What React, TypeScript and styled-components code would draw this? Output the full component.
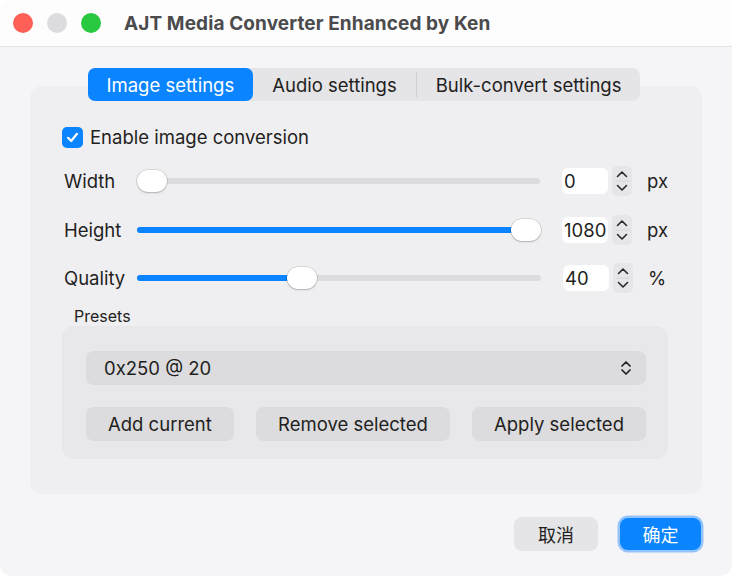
import React from "react";
import styled, { createGlobalStyle } from "styled-components";

const GlobalStyle = createGlobalStyle`
  html, body {
    margin: 0;
    padding: 0;
    background: #ffffff;
  }
  body {
    font-family: Inter, "Noto Sans", "Noto Sans CJK SC", sans-serif;
    color: #1f1f21;
    -webkit-font-smoothing: antialiased;
  }
`;

const BLUE = "#0a84ff";

type SliderRowT = { label: string; value: number; max: number; unit: string };

const rows: SliderRowT[] = [
  { label: "Width", value: 0, max: 1080, unit: "px" },
  { label: "Height", value: 1080, max: 1080, unit: "px" },
  { label: "Quality", value: 40, max: 100, unit: "%" },
];

const TRACK_W = 404;
const THUMB_W = 30;

function Stepper() {
  return (
    <StepperBox>
      <svg width="20" height="30" viewBox="0 0 20 30">
        <path d="M5.5 10.5 L10 6 L14.5 10.5" fill="none" stroke="#2a2a2c" strokeWidth="1.6" strokeLinecap="round" strokeLinejoin="round" />
        <line x1="3" y1="15" x2="17" y2="15" stroke="#d6d5d8" strokeWidth="1" />
        <path d="M5.5 19.5 L10 24 L14.5 19.5" fill="none" stroke="#2a2a2c" strokeWidth="1.6" strokeLinecap="round" strokeLinejoin="round" />
      </svg>
    </StepperBox>
  );
}

function Slider({ value, max }: { value: number; max: number }) {
  const ratio = value / max;
  const left = ratio * (TRACK_W - THUMB_W);
  return (
    <Track>
      <Fill style={{ width: left + THUMB_W / 2 }} />
      <Thumb style={{ left }} />
    </Track>
  );
}

function App() {
  return (
    <Window>
      <GlobalStyle />
      <TitleBar>
        <Lights>
          <Light color="#fe5f57" />
          <Light color="#dcdcde" />
          <Light color="#28c840" />
        </Lights>
        <Title>AJT Media Converter Enhanced by Ken</Title>
      </TitleBar>

      <Body>
        <Tabs>
          <Tab active>Image settings</Tab>
          <Tab>Audio settings</Tab>
          <TabDivider />
          <Tab>Bulk-convert settings</Tab>
        </Tabs>

        <Group>
          <CheckRow>
            <Checkbox>
              <svg width="15" height="15" viewBox="0 0 15 15">
                <path d="M3 7.8 L6.2 11 L12 3.8" fill="none" stroke="#fff" strokeWidth="2.2" strokeLinecap="round" strokeLinejoin="round" />
              </svg>
            </Checkbox>
            <span>Enable image conversion</span>
          </CheckRow>

          <Rows>
            {rows.map((r) => (
              <Row key={r.label}>
                <RowLabel>{r.label}</RowLabel>
                <Slider value={r.value} max={r.max} />
                <NumField>{r.value}</NumField>
                <Stepper />
                <Unit>{r.unit}</Unit>
              </Row>
            ))}
          </Rows>

          <PresetsLabel>Presets</PresetsLabel>
          <PresetsBox>
            <Popup>
              <span>0x250 @ 20</span>
              <svg width="12" height="18" viewBox="0 0 12 18">
                <path d="M2 7 L6 3 L10 7" fill="none" stroke="#222" strokeWidth="1.7" strokeLinecap="round" strokeLinejoin="round" />
                <path d="M2 11 L6 15 L10 11" fill="none" stroke="#222" strokeWidth="1.7" strokeLinecap="round" strokeLinejoin="round" />
              </svg>
            </Popup>
            <ButtonRow>
              <GrayButton>Add current</GrayButton>
              <GrayButton>Remove selected</GrayButton>
              <GrayButton>Apply selected</GrayButton>
            </ButtonRow>
          </PresetsBox>
        </Group>

        <Footer>
          <DialogButton>取消</DialogButton>
          <DialogButton primary>确定</DialogButton>
        </Footer>
      </Body>
    </Window>
  );
}

export default App;

const Window = styled.div`
  width: 732px;
  height: 576px;
  border-radius: 12px;
  background: #f5f4f7;
  overflow: hidden;
  display: flex;
  flex-direction: column;
`;

const TitleBar = styled.div`
  height: 46px;
  background: #fdfdfd;
  border-bottom: 1px solid #e4e3e6;
  display: flex;
  align-items: center;
  padding-left: 13px;
  flex-shrink: 0;
`;

const Lights = styled.div`
  display: flex;
  gap: 14px;
`;

const Light = styled.div<{ color: string }>`
  width: 20px;
  height: 20px;
  border-radius: 50%;
  background: ${(p) => p.color};
`;

const Title = styled.div`
  margin-left: 23px;
  font-size: 19px;
  font-weight: 700;
  color: #4b4b4d;
  letter-spacing: 0.1px;
`;

const Body = styled.div`
  display: flex;
  flex-direction: column;
  padding: 21px 30px 0 30px;
`;

const Tabs = styled.div`
  align-self: center;
  margin-left: -4px;
  position: relative;
  z-index: 1;
  display: flex;
  align-items: center;
  height: 33px;
  background: #e5e4e7;
  border-radius: 8px;
  font-size: 18.5px;
`;

const Tab = styled.div<{ active?: boolean }>`
  height: 33px;
  display: flex;
  align-items: center;
  padding: 0 19px;
  border-radius: 7px;
  background: ${(p) => (p.active ? BLUE : "transparent")};
  color: ${(p) => (p.active ? "#fff" : "#1f1f21")};
`;

const TabDivider = styled.div`
  width: 1px;
  height: 25px;
  background: #cfced2;
`;

const Group = styled.div`
  margin-top: -15px;
  height: 408px;
  box-sizing: border-box;
  background: #efeef1;
  border-radius: 12px;
  padding: 0 34px 0 32px;
  display: flex;
  flex-direction: column;
`;

const CheckRow = styled.div`
  margin-top: 40px;
  height: 22px;
  display: flex;
  align-items: center;
  gap: 7px;
  font-size: 18.5px;
`;

const Checkbox = styled.div`
  width: 21px;
  height: 21px;
  border-radius: 5px;
  background: ${BLUE};
  display: flex;
  align-items: center;
  justify-content: center;
`;

const Rows = styled.div`
  margin-top: 9px;
  display: flex;
  flex-direction: column;
`;

const Row = styled.div`
  height: 48.5px;
  display: flex;
  align-items: center;
  padding-left: 2px;
  font-size: 18.5px;
`;

const RowLabel = styled.div`
  width: 73px;
`;

const Track = styled.div`
  position: relative;
  width: ${TRACK_W}px;
  height: 6px;
  border-radius: 3px;
  background: #dcdbde;
`;

const Fill = styled.div`
  height: 100%;
  border-radius: 3px;
  background: ${BLUE};
`;

const Thumb = styled.div`
  position: absolute;
  top: -8px;
  width: ${THUMB_W}px;
  height: 22px;
  border-radius: 11px;
  background: #fff;
  box-shadow: 0 0 0 0.5px rgba(0, 0, 0, 0.18), 0 1px 2px rgba(0, 0, 0, 0.18);
`;

const NumField = styled.div`
  margin-left: 22px;
  width: 46px;
  height: 26px;
  box-sizing: border-box;
  padding-left: 2px;
  background: #fff;
  border-radius: 6px;
  display: flex;
  align-items: center;
  font-size: 18.5px;
`;

const StepperBox = styled.div`
  margin-left: 4px;
  width: 20px;
  height: 30px;
  border-radius: 5px;
  background: #e6e5e8;
  display: flex;
`;

const Unit = styled.div`
  margin-left: 15px;
`;

const PresetsLabel = styled.div`
  margin-top: 3px;
  padding-left: 12px;
  height: 20px;
  line-height: 20px;
  font-size: 16px;
`;

const PresetsBox = styled.div`
  margin-top: 0;
  background: #e8e7ea;
  border-radius: 12px;
  padding: 25px 22px 18px 24px;
  display: flex;
  flex-direction: column;
  gap: 22px;
`;

const Popup = styled.div`
  height: 34px;
  border-radius: 8px;
  background: #dcdbde;
  display: flex;
  align-items: center;
  justify-content: space-between;
  padding: 0 14px 0 18px;
  font-size: 18.5px;
`;

const ButtonRow = styled.div`
  display: flex;
  justify-content: space-between;
`;

const GrayButton = styled.div`
  height: 34px;
  border-radius: 8px;
  background: #dcdbde;
  display: flex;
  align-items: center;
  padding: 0 22px;
  font-size: 18.5px;
`;

const Footer = styled.div`
  margin-top: 23px;
  display: flex;
  justify-content: flex-end;
  align-items: center;
  gap: 22px;
  padding-right: 1px;
`;

const DialogButton = styled.div<{ primary?: boolean }>`
  width: ${(p) => (p.primary ? "81px" : "84px")};
  height: ${(p) => (p.primary ? "32px" : "34px")};
  border-radius: 8px;
  display: flex;
  align-items: center;
  justify-content: center;
  font-family: "Noto Sans CJK SC", sans-serif;
  font-size: 18px;
  background: ${(p) => (p.primary ? BLUE : "#e5e4e7")};
  color: ${(p) => (p.primary ? "#fff" : "#1f1f21")};
  box-shadow: ${(p) => (p.primary ? "0 0 0 2.5px #93c3fb" : "none")};
`;
